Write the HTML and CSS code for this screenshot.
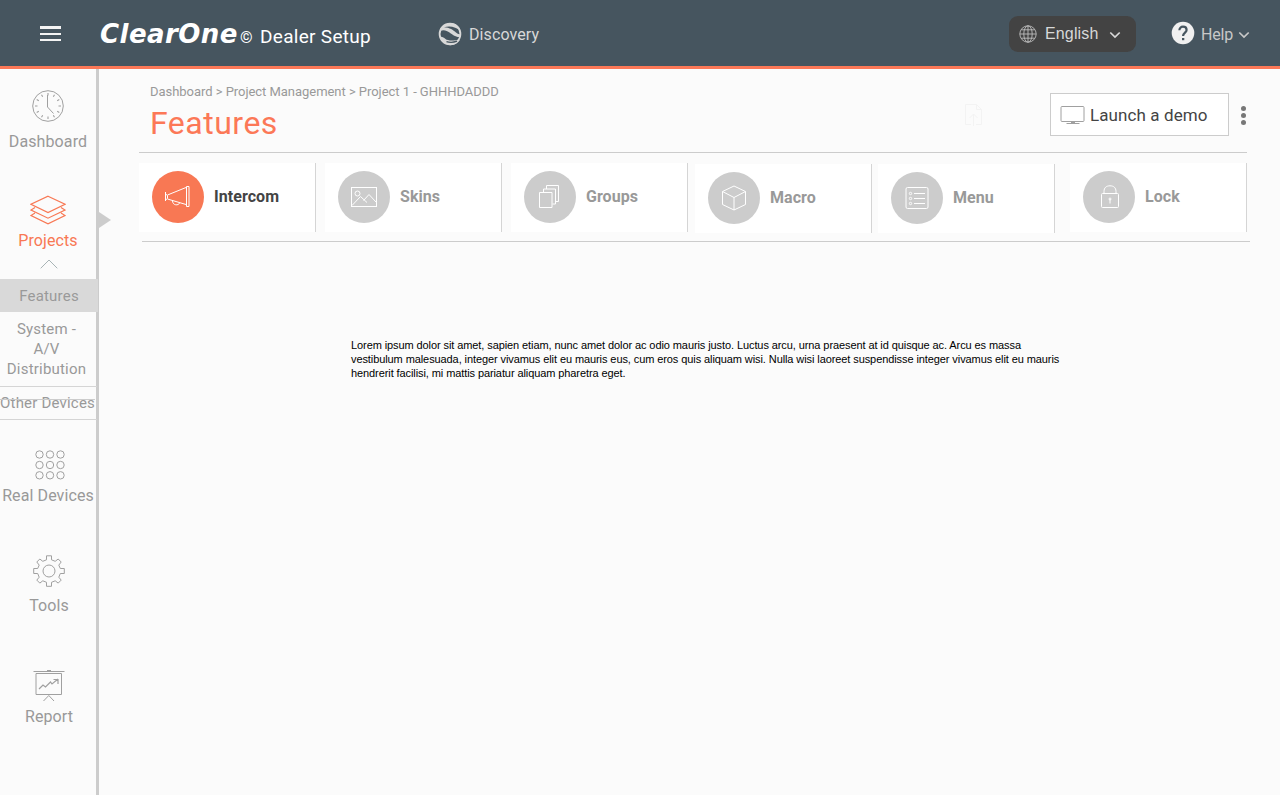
FILE: index.html
```html
<!DOCTYPE html>
<html lang="en">
<head>
<meta charset="utf-8">
<title>ClearOne Dealer Setup</title>
<link rel="stylesheet" href="styles.css">
</head>
<body>
<header class="topbar">
  <button class="burger" aria-label="Menu"><span></span><span></span><span></span></button>
  <div class="brand"><span class="brand-name">ClearOne</span><span class="brand-mark">©</span><span class="brand-sub">Dealer Setup</span></div>
  <a class="discovery">
    <svg width="24" height="24" viewBox="0 0 24 24"><circle cx="12" cy="12" r="10.400" fill="none" stroke="#d8d8d8" stroke-width="1.800"/><path d="M2.500 6.500C5 2.500 10 .8 14.500 1.200 19 2 22 5.500 22.700 9 18 4.800 12 3.500 6 5.200c6 .3 9 2.800 12 5.300 1.800 1.500 3.300 1.800 4.800 2l-.4 2.500c-5 .5-8-2.500-10.500-4.200C8.500 8.500 6 7.500 2 9zM1.500 14.500c2.500.2 4.500.8 6 2.500 2.200 1.800 7 1.800 14.500.8-2 3.400-5.500 5.400-9.500 5.400S3.500 20 1.500 14.500z" fill="#d8d8d8"/><path d="M8.500 19.600c3 1 7 .9 10.500-.4" stroke="#46555f" stroke-width="1.400" fill="none"/></svg>
    <span>Discovery</span>
  </a>
  <button class="language">
    <svg width="18" height="18" viewBox="0 0 18 18" fill="none" stroke="#bdbdbd" stroke-width=".9"><circle cx="9" cy="9" r="8.200"/><ellipse cx="9" cy="9" rx="4.200" ry="8.200"/><path d="M9 .8v16.400M.8 9h16.400M2.200 4.800h13.600M2.200 13.200h13.600"/></svg>
    <span>English</span>
    <svg class="chev" width="12" height="8" viewBox="0 0 12 8"><path d="M1.300 1.500 6 6l4.700-4.500" fill="none" stroke="#d8d8d8" stroke-width="1.700"/></svg>
  </button>
  <a class="help">
    <svg width="24" height="24" viewBox="0 0 24 24"><circle cx="12" cy="12" r="11.300" fill="#f0f0f0"/><path d="M8.400 9.300c0-2.200 1.500-3.600 3.600-3.600s3.600 1.300 3.600 3.300c0 2.500-3.500 2.900-3.500 6" fill="none" stroke="#46555f" stroke-width="2.200"/><path d="M11 17h2.300v2.200H11z" fill="#46555f"/></svg>
    <span>Help</span>
    <svg class="chev" width="12" height="8" viewBox="0 0 12 8"><path d="M1.300 1.500 6 6l4.700-4.500" fill="none" stroke="#c8c8c8" stroke-width="1.700"/></svg>
  </a>
</header>
<div class="shell">
  <nav class="sidebar">
    <a class="nav-item dashboard">
      <svg width="34" height="34" viewBox="0 0 34 34" fill="none" stroke="#a0a0a0"><circle cx="17" cy="17" r="15.300"/><path d="M16.500 6v12l6 6.500"/><path d="M17 4v2.500M17 27.500V30M4 17h2.500M27.500 17H30M10.500 5.700l1.200 2.100M22.300 26.200l1.200 2.100M5.700 10.500l2.100 1.200M26.200 22.300l2.100 1.200M23.500 5.700l-1.200 2.100M11.700 26.200l-1.200 2.100M28.300 10.500l-2.100 1.200M7.800 22.300l-2.100 1.200" stroke-width="1.100"/></svg>
      <span>Dashboard</span>
    </a>
    <a class="nav-item projects">
      <svg width="36" height="30" viewBox="0 0 36 30" fill="none" stroke="#f87854" stroke-width="1.200"><path d="M18 1.200 35 9.300 18 17.500 1 9.300z"/><path d="M5 12.500 1 15l17 8.200L35 15l-4-2.500M5 18 1 20.500l17 8.300 17-8.300-4-2.500"/></svg>
      <span>Projects</span>
      <svg class="up" width="18" height="10" viewBox="0 0 18 10" fill="none" stroke="#a8b4b6"><path d="m.7 9.300 8.300-8.300 8.300 8.300"/></svg>
    </a>
    <div class="submenu">
      <a class="sub active">Features</a>
      <a class="sub system">System - <br>A/V<br>Distribution</a>
      <a class="sub other">Other Devices<i class="strike"></i></a>
    </div>
    <a class="nav-item real">
      <svg width="30" height="30" viewBox="0 0 30 30" fill="none" stroke="#a0a0a0"><circle cx="4.500" cy="4.500" r="3.700"/><circle cx="15" cy="4.500" r="3.700"/><circle cx="25.500" cy="4.500" r="3.700"/><circle cx="4.500" cy="15" r="3.700"/><circle cx="15" cy="15" r="3.700"/><circle cx="25.500" cy="15" r="3.700"/><circle cx="4.500" cy="25.300" r="3.700"/><circle cx="15" cy="25.300" r="3.700"/><circle cx="25.500" cy="25.300" r="3.700"/></svg>
      <span>Real Devices</span>
    </a>
    <a class="nav-item tools">
      <svg width="32" height="32" viewBox="0 0 32 32" fill="none" stroke="#a0a0a0"><circle cx="16" cy="16" r="6"/><path d="M13.500.8h5v4l3.700 1.500 3-2.300 3 3-2.400 3.100 1.500 3.400h4v5h-4l-1.500 3.700 2.400 2.900-3 3-3-2.300-3.700 1.500v4h-5v-4l-3.700-1.500-3 2.300-3-3 2.400-2.900-1.500-3.700h-4v-5h4l1.500-3.400L3.800 7l3-3 3 2.300 3.700-1.500z" stroke-linejoin="round"/></svg>
      <span>Tools</span>
    </a>
    <a class="nav-item report">
      <svg width="32" height="32" viewBox="0 0 32 32" fill="none" stroke="#a0a0a0"><path d="M.5 1.500h31M14 .5h4M3 3.500h25.500v21H3zM10.500 31l5.300-5.500L21 31"/><path d="m6 19 4-4 2.500 2 5-5 1.500 2 6-5M20.500 9.500H25v4.500" stroke-width="1.200"/></svg>
      <span>Report</span>
    </a>
    <i class="pointer"></i>
  </nav>
  <main class="content">
    <div class="page-head">
      <div class="titles">
        <div class="crumbs">Dashboard &gt; Project Management &gt; Project 1 - GHHHDADDD</div>
        <h1>Features</h1>
      </div>
      <svg class="upload" width="17" height="23" viewBox="0 0 17 23" fill="none" stroke="#f3f3f3"><path d="M6 20.500H.5V.5h11l5 5v15H11M11.500.5v5h5M8.500 22V10M4.500 14l4-4 4 4"/></svg>
      <button class="demo">
        <svg width="26" height="20" viewBox="0 0 26 20" fill="none" stroke="#a0a0a0"><rect x="1" y="1.500" width="23" height="15" rx="1"/><path d="M6.500 18.500h13M11 17.500h4"/></svg>
        <span>Launch a demo</span>
      </button>
      <button class="more" aria-label="More"><i></i><i></i><i></i></button>
    </div>
    <div class="tabs">
      <a class="tab current"><span class="disc"><svg width="26" height="22" viewBox="0 0 26 22"><path d="M1.500 6v9M1.500 8l2 1.500v3L1.500 14M3.500 9 22 1.500M3.500 13 22 18.500M22.500.5h2.500v20h-2.500zM8.500 15c.3 5 6.500 4.500 7 2"/></svg></span><span>Intercom</span></a>
      <a class="tab skins"><span class="disc"><svg width="26" height="22" viewBox="0 0 26 22"><rect x=".5" y="1.500" width="25" height="19"/><circle cx="6.500" cy="7.500" r="2.500"/><path d="m1 19.500 8.500-9 6.500 6M12.500 14.500l5.500-6 7 7.500"/></svg></span><span>Skins</span></a>
      <a class="tab groups"><span class="disc"><svg width="22" height="24" viewBox="0 0 22 24"><path d="M1.500 7.500h12.500v15H1.500zM5.500 7V4h12v15h-3M8.500 4V.5H20.500v16h-3"/></svg></span><span>Groups</span></a>
      <a class="tab macro"><span class="disc"><svg width="24" height="26" viewBox="0 0 24 26"><path d="M12 1 23.500 6.500V19.500L12 25 .5 19.500V6.500zM.5 6.500 12 12.500l11.500-6M12 12.500V25"/></svg></span><span>Macro</span></a>
      <a class="tab menu"><span class="disc"><svg width="24" height="24" viewBox="0 0 24 24"><rect x="1" y="1.500" width="22" height="21" rx="1.500"/><path d="M9 7.500h11M9 12.500h11M9 17.500h11"/><circle cx="5.500" cy="7.500" r="1.200"/><circle cx="5.500" cy="12.500" r="1.200"/><circle cx="5.500" cy="17.500" r="1.200"/></svg></span><span>Menu</span></a>
      <a class="tab lock"><span class="disc"><svg width="20" height="24" viewBox="0 0 20 24"><rect x="1.500" y="8.500" width="17" height="14" rx="1"/><path d="M4 8.500V6.500C4 2.500 6.500.8 10 .8s6 1.700 6 5.700v2M10 14v4.500"/><circle cx="10" cy="14" r="1"/></svg></span><span>Lock</span></a>
    </div>
    <p class="copy">Lorem ipsum dolor sit amet, sapien etiam, nunc amet dolor ac odio mauris justo. Luctus arcu, urna praesent at id quisque ac. Arcu es massa<br>vestibulum malesuada, integer vivamus elit eu mauris eus, cum eros quis aliquam wisi. Nulla wisi laoreet suspendisse integer vivamus elit eu mauris<br>hendrerit facilisi, mi mattis pariatur aliquam pharetra eget.</p>
  </main>
</div>
</body>
</html>
```
FILE: styles.css
```css
* { box-sizing: border-box; }
body { margin: 0; height: 795px; overflow: hidden; background: #fbfbfb; color: #999; font: 16px/20px Roboto, sans-serif; }
button { border: 0; padding: 0; background: none; font: inherit; color: inherit; }
svg { display: block; flex: none; }
span { white-space: nowrap; }
.topbar { height: 69px; background: #46555f; border-bottom: 3px solid #fc7857; display: flex; align-items: flex-start; color: #d8d8d8; }
.burger { margin: 26px 0 0 40px; width: 21px; display: flex; flex-direction: column; gap: 4px; }
.burger span { height: 2px; background: #f4f4f4; }
.burger span:first-child { height: 3px; }
.brand { margin: 19px 0 0 39px; width: 338px; display: flex; align-items: baseline; color: #fff; line-height: 30px; }
.brand-name { width: 140px; font: italic bold 26px/30px "DejaVu Sans", sans-serif; letter-spacing: .45px; }
.brand-mark { width: 20px; font-size: 16px; }
.brand-sub { font-size: 19px; letter-spacing: .3px; }
.discovery { margin-top: 22px; width: 571px; display: flex; gap: 7px; }
.discovery span { line-height: 25px; letter-spacing: .1px; }
.language { margin-top: 16px; width: 127px; height: 36px; border-radius: 9px; background: #434343; display: flex; align-items: center; padding-left: 10px; font-family: "Liberation Sans", sans-serif; }
.language span { width: 63px; margin-left: 8px; text-align: left; letter-spacing: .15px; }
.language .chev { margin: 2px 0 0 1px; }
.help { margin: 21px 0 0 35px; display: flex; align-items: center; color: #c8c8c8; }
.help span { margin: 3px 5px 0 6px; letter-spacing: -.15px; }
.help .chev { margin-top: 4px; }
.shell { display: flex; height: 726px; }
.sidebar { position: relative; width: 99px; border-right: 3px solid #ccc; display: flex; flex-direction: column; }
.nav-item { display: flex; flex-direction: column; align-items: center; letter-spacing: .1px; }
.dashboard { margin-top: 20px; }
.dashboard span { margin-top: 9px; }
.projects { margin-top: 43px; color: #f87854; }
.projects span { margin-top: 6px; }
.projects .up { margin: 8px 0 0 1px; }
.submenu { margin-top: 10px; font-size: 15px; letter-spacing: .2px; text-align: center; }
.sub { display: block; }
.active { width: 98px; height: 33px; line-height: 34px; background: #d9d9d9; position: relative; }
.system { height: 75px; padding: 7px 4px 0 0; width: 97px; border-bottom: 1px solid #d5d5d5; }
.other { height: 33px; line-height: 32px; width: 97px; padding-right: 2px; border-bottom: 1px solid #d5d5d5; white-space: nowrap; position: relative; }
.strike { position: absolute; left: 0; top: 12px; width: 95px; height: 1px; background: #ccc; }
.real { margin-top: 30px; padding-left: 3px; }
.real span { margin: 6px 3px 0 0; }
.tools { margin-top: 49px; padding-left: 2px; }
.tools span { margin-top: 9px; }
.report { margin-top: 54px; padding-left: 2px; }
.report span { margin-top: 5px; }
.pointer { position: absolute; left: 99px; top: 143px; border-left: 12px solid #ccc; border-top: 8px solid transparent; border-bottom: 8px solid transparent; }
.content { flex: 1; }
.page-head { margin-left: 40px; width: 1108px; height: 84px; border-bottom: 1px solid #ccc; display: flex; align-items: flex-start; }
.titles { width: 826px; padding: 14px 0 0 11px; }
.crumbs { font-size: 13px; line-height: 17px; letter-spacing: -.04px; }
h1 { margin: 3px 0 0; font-size: 32px; line-height: 40px; font-weight: 400; color: #fc7857; letter-spacing: .5px; }
.upload { margin: 35px 68px 0 0; }
.demo { margin-top: 24px; width: 179px; height: 43px; border: 1px solid #ccc; background: #fff; display: flex; align-items: center; padding-left: 9px; gap: 4px; color: #444; font-size: 17px; letter-spacing: .1px; }
.more { margin: 37px 0 0 12px; display: flex; flex-direction: column; gap: 2px; flex: none; }
.more i { width: 5px; height: 5px; border-radius: 50%; background: #777; }
.tabs { margin-left: 43px; height: 89px; width: 1108px; border-bottom: 1px solid #ccc; display: flex; padding-top: 10px; }
.tab { flex: none; width: 177px; height: 69px; margin-right: 9px; background: #fff; border-right: 1px solid #d5d5d5; display: flex; align-items: center; gap: 10px; padding: 0 0 1px 13px; font-weight: 700; color: #999; letter-spacing: .05px; }
.current { margin-left: -3px; color: #444; }
.groups { margin-right: 7px; }
.macro, .menu { margin-top: 1px; }
.macro { margin-right: 6px; }
.menu { margin-right: 15px; }
.lock { margin-right: 0; }
.disc { width: 52px; height: 52px; flex: none; border-radius: 50%; background: #ccc; display: flex; align-items: center; justify-content: center; }
.current .disc { background: #f87854; }
.disc svg { fill: none; stroke: #fff; stroke-width: 1; }
.current .disc svg { margin-right: 2px; }
.groups .disc svg { margin-right: 2px; }
.lock .disc svg { margin-left: 2px; }
.copy { margin: 96px 0 0 252px; font: 11px/14px "Liberation Sans", sans-serif; letter-spacing: -.09px; color: #000; white-space: nowrap; }
```
